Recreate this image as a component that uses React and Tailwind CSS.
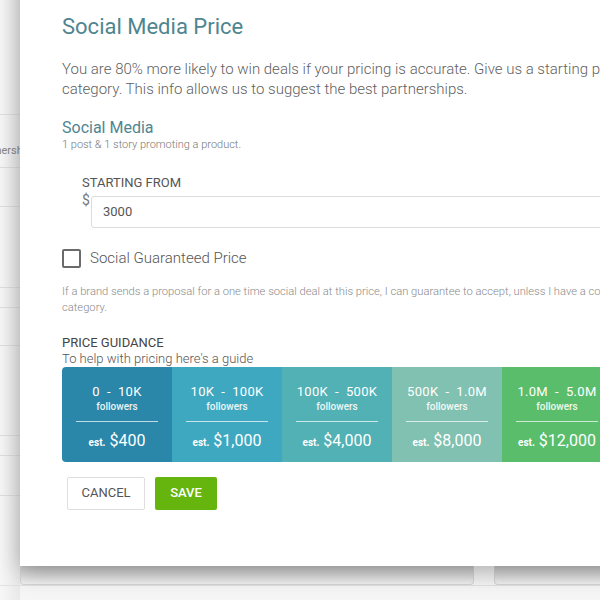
import React from 'react'

const tiers = [
  { range: '0 - 10K', price: '$400', color: 'bg-[#2a87a9]' },
  { range: '10K - 100K', price: '$1,000', color: 'bg-[#3ea8c1]' },
  { range: '100K - 500K', price: '$4,000', color: 'bg-[#51b1b4]' },
  { range: '500K - 1.0M', price: '$8,000', color: 'bg-[#80c1b1]' },
  { range: '1.0M - 5.0M', price: '$12,000', color: 'bg-[#59bd6c]' },
  { range: '5.0M+', price: '$20,000', color: 'bg-[#4cae55]' },
]

const bgRows = [114, 167, 206, 287, 307, 345, 435, 455, 495]

const Background = () => (
  <div className="absolute inset-0 bg-[#f6f6f6]">
    <div className="relative h-full w-[20px] overflow-hidden bg-gradient-to-r from-[#f7f7f7] to-[#e9e9e9]">
      {bgRows.map((top) => (
        <div key={top} className="absolute left-0 h-px w-full bg-[#dedede]" style={{ top }} />
      ))}
      <span className="absolute left-[-25px] top-[143px] whitespace-nowrap text-[11px] text-[#888]">Partnership</span>
    </div>
    <div className="absolute left-0 top-[585px] h-px w-full bg-[#e2e2e2]" />
    <div className="absolute left-[20px] top-[560px] h-[25px] w-[454px] rounded-b-[4px] border border-t-0 border-[#d6d6d6] bg-gradient-to-b from-[#bdbdbd] to-[#f2f2f2]" />
    <div className="absolute left-[494px] top-[560px] h-[25px] w-[200px] rounded-b-[4px] border border-t-0 border-[#d6d6d6] bg-gradient-to-b from-[#bdbdbd] to-[#f2f2f2]" />
  </div>
)

const PriceTile = ({ tier, first }) => (
  <div className={`${tier.color} flex h-[95px] w-[110px] shrink-0 flex-col items-center pt-[17px] text-white ${first ? 'rounded-l-[4px]' : ''}`}>
    <div className="text-[13px] font-normal leading-[16px] tracking-[0.3px]">{tier.range.replace(' - ', '\u00a0 - \u00a0')}</div>
    <div className="text-[10px] font-medium leading-[14px] opacity-90">followers</div>
    <div className="mt-[7px] h-px w-[82px] bg-white/70" />
    <div className="mt-[7px] flex items-baseline gap-[4px]">
      <span className="text-[10px] font-bold">est.</span>
      <span className="text-[16px] font-normal">{tier.price}</span>
    </div>
  </div>
)

const App = () => (
  <div className="relative h-[600px] w-[600px] overflow-hidden font-['Roboto',sans-serif]">
    <Background />
    <div className="absolute left-[20px] top-[-40px] h-[606px] w-[720px] bg-white pl-[42px] pt-[53px] shadow-[0_6px_22px_rgba(0,0,0,0.3)]">
      <h1 className="text-[22px] font-normal leading-[28px] text-[#4f8590]">Social Media Price</h1>

      <p className="mt-[18px] whitespace-nowrap text-[15px] font-light leading-[20px] text-[#5f5f5f]">
        You are 80% more likely to win deals if your pricing is accurate. Give us a starting price for each
        <br />
        category. This info allows us to suggest the best partnerships.
      </p>

      <h2 className="mt-[19px] text-[16px] font-normal leading-[20px] text-[#4f8590]">Social Media</h2>
      <p className="text-[11px] font-light leading-[14px] text-[#777]">1 post &amp; 1 story promoting a product.</p>

      <div className="mt-[23px] pl-[20px]">
        <div className="text-[13px] font-normal uppercase leading-[16px] text-[#555]">Starting From</div>
        <div className="mt-[2px] flex">
          <span className="w-[9px] text-[14px] leading-[14px] text-[#777]">$</span>
          <div className="mt-[3px] flex h-[32px] w-[560px] items-center rounded-[3px] border border-[#dcdcdc] pl-[11px] text-[13px] text-[#555]">
            3000
          </div>
        </div>
      </div>

      <label className="mt-[19px] flex items-center gap-[9px]">
        <span className="h-[19px] w-[19px] rounded-[2px] border-2 border-[#6b6b6b]" />
        <span className="text-[15px] font-light text-[#555]">Social Guaranteed Price</span>
      </label>

      <p className="mt-[14px] whitespace-nowrap text-[11.2px] font-light leading-[16px] text-[#8a8a8a]">
        If a brand sends a proposal for a one time social deal at this price, I can guarantee to accept, unless I have a conflicting
        <br />
        category.
      </p>

      <div className="mt-[19px] text-[13px] font-normal uppercase leading-[16px] text-[#444]">Price Guidance</div>
      <div className="text-[13px] font-light leading-[16px] text-[#555]">To help with pricing here's a guide</div>

      <div className="flex">
        {tiers.map((tier, i) => (
          <PriceTile key={tier.range} tier={tier} first={i === 0} />
        ))}
      </div>

      <div className="mt-[15px] flex gap-[10px] pl-[5px]">
        <button type="button" className="h-[33px] w-[78px] rounded-[2px] border border-[#dedede] bg-white text-[13px] text-[#555]">
          CANCEL
        </button>
        <button type="button" className="h-[33px] w-[62px] rounded-[2px] bg-[#66b50e] text-[13px] font-medium text-white">
          SAVE
        </button>
      </div>
    </div>
  </div>
)

export default App
